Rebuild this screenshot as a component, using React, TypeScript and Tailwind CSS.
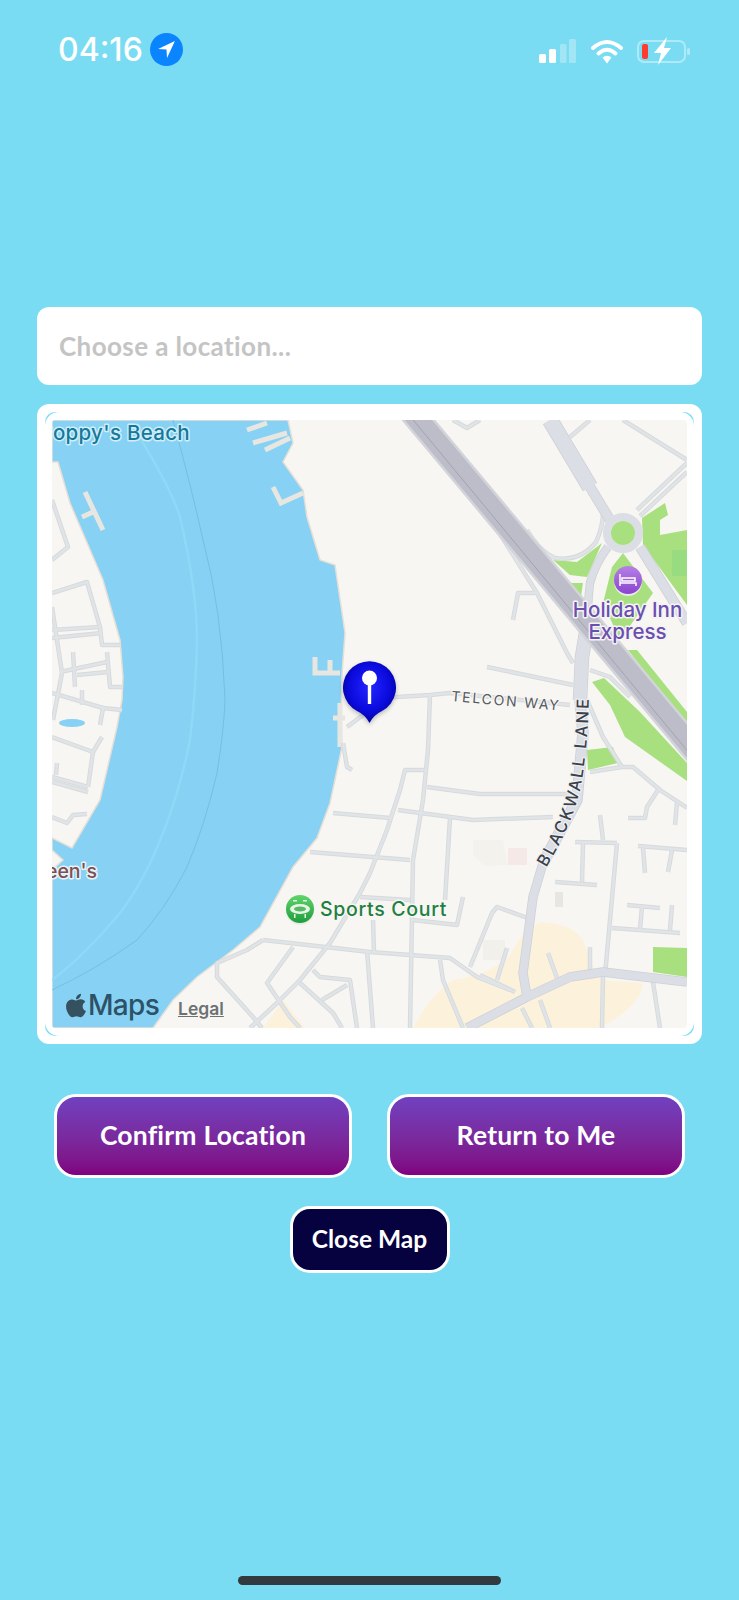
import { FaApple } from 'react-icons/fa'

// map data is in page pixels, see the viewBox on the svg
const LOCAL_ROADS = [
  'M570 437 L590 420',
  'M623 420 L687 460',
  'M453 420 L467 428 L480 420',
  'M527 530 Q540 552 555 558 Q580 562 596 542 Q604 525 603 507',
  'M493 523 L537 593 L567 653 L573 663',
  'M513 620 L518 593 L537 593',
  'M487 667 L573 685',
  'M352 699 L397 697 L430 695 L450 693 L570 705',
  'M430 695 L428 750 L423 800 L413 860 L410 1028',
  'M425 770 L405 770 L400 790 L387 830 L370 873 L360 893 L330 943 L300 980 L277 1003 L250 1028',
  'M427 787 L480 794 L570 794',
  'M398 810 L473 820 L553 817',
  'M450 818 L445 900',
  'M333 813 L390 818',
  'M310 852 L410 860',
  'M360 897 L410 900',
  'M373 920 L374 952',
  'M463 897 L457 925 L413 920',
  'M263 940 L370 952 L450 958 L477 977 L510 990',
  'M263 940 L247 950 L217 963 L217 977 L253 1017 L262 1028',
  'M293 947 L267 983 L290 1017 L300 1028',
  'M313 970 L320 977 L350 980 L357 1028',
  'M300 983 L333 1013 L342 1028',
  'M322 1000 L347 985',
  'M367 950 L373 1028',
  'M440 960 L443 980 L463 1028',
  'M470 967 L492 913 L497 907 L533 920',
  'M507 948 L497 980',
  'M480 975 L515 992',
  'M522 1008 L532 1028',
  'M540 1000 L550 1028',
  'M603 975 L602 1028',
  'M617 843 L605 975',
  'M575 842 L617 843',
  'M583 843 L582 882',
  'M555 882 L597 885',
  'M600 815 L603 840',
  'M612 928 L680 933',
  'M627 905 L660 908',
  'M642 907 L640 929',
  'M672 905 L670 930',
  'M638 846 L687 850',
  'M643 848 L645 873',
  'M672 850 L668 872',
  'M590 947 L590 970',
  'M548 953 L557 978',
  'M653 982 L660 1028',
  'M587 700 L603 737 L622 767',
  'M590 772 L622 767 L633 767 L660 790 L687 808',
  'M658 790 L647 807 L645 818 L628 818',
  'M677 803 L675 825',
  'M590 670 L610 677 L630 697',
  'M637 510 L687 463',
  'M640 516 L687 472',
  // west bank
  'M52 500 L68 547 L52 560',
  'M52 593 L87 582 L100 627 L102 645 L120 645',
  'M52 630 L100 627',
  'M52 638 L102 633',
  'M52 607 L62 673 L53 720',
  'M73 652 L75 687',
  'M107 652 L110 687 L122 687',
  'M60 672 L107 662',
  'M77 675 L108 672',
  'M52 693 L103 708 L100 725',
  'M82 690 L82 705',
  'M103 708 L122 710',
  'M52 737 L93 752 L102 737',
  'M93 752 L88 787',
  'M52 777 L88 787',
  'M52 782 L88 792',
  'M57 763 L56 775',
  'M52 817 L67 823 L73 815 L87 814',
  'M343 743 L347 767 L352 770',
  'M347 727 L363 715',
]

// [path, width]: the lane narrows as it runs south
const MAIN_ROADS: [string, number][] = [
  ['M550 420 L590 487', 15],
  ['M590 487 L610 520', 9],
  ['M640 547 L687 623', 9],
  ['M587 627 Q588 600 590 583 Q596 562 608 547', 7],
  ['M587 627 L582 657 L580 700', 13],
  ['M580 700 L583 733 L577 800 L543 863', 10],
  ['M543 863 L533 897 L523 973 L527 997', 8],
  ['M467 1028 L527 997 L570 977 L603 972 L687 982', 8],
]

const PIERS = [
  'M85 492 L103 530',
  'M82 517 L93 512',
  'M273 487 L281 503 L303 493',
  'M247 430 L267 423',
  'M253 443 L287 433',
  'M265 450 L290 438',
  'M315 657 L315 673 L340 673',
  'M330 660 L330 673',
  'M333 718 L345 718',
  'M340 703 L340 747',
]

const haloStyle = {
  paintOrder: 'stroke',
  strokeLinejoin: 'round',
} as const

const MapLayer = () => (
  <svg
    viewBox="52 420 635 608"
    className="block h-[608px] w-[635px]"
    fontFamily="Inter, 'Liberation Sans', sans-serif"
  >
    <defs>
      <linearGradient id="sportsIcon" x1="0" y1="0" x2="0" y2="1">
        <stop offset="0" stopColor="#5fd66b" />
        <stop offset="1" stopColor="#1f9c3d" />
      </linearGradient>
      <linearGradient id="hotelIcon" x1="0" y1="0" x2="0" y2="1">
        <stop offset="0" stopColor="#b680e6" />
        <stop offset="1" stopColor="#8a45cf" />
      </linearGradient>
      <radialGradient id="pinFill" cx="0.5" cy="0.42" r="0.6">
        <stop offset="0" stopColor="#2424ff" />
        <stop offset="0.6" stopColor="#0c0ce0" />
        <stop offset="1" stopColor="#00009c" />
      </radialGradient>
    </defs>

    <rect x="52" y="420" width="635" height="608" fill="#f8f6f2" />

    {/* river */}
    <path
      d="M52 420 L288 420 L293 443 L283 462 L303 490 L307 517 L320 560 L335 565 L345 633 L342 674 L341 720 L342 747 L330 803 L317 838 L293 867 L260 927 L233 950 L197 977 L173 1000 L153 1028 L52 1028 L52 870 L63 860 L52 850 L52 838 L72 848 L100 800 L117 727 L122 700 L123 677 L120 640 L103 580 L70 503 L58 462 L52 462 Z"
      fill="#86d1f4"
      stroke="#e6dfd6"
      strokeWidth="1.5"
    />
    <path
      d="M137 433 Q172 490 180 517 Q197 590 197 640 Q196 690 190 740 Q180 790 163 833 Q145 880 120 913 Q85 955 52 980"
      fill="none"
      stroke="#90d8f7"
      strokeWidth="2.5"
    />
    <path
      d="M173 420 Q192 490 203 540 Q222 610 225 700 Q224 730 217 773 Q205 825 187 867 Q165 910 137 940 Q95 970 52 990"
      fill="none"
      stroke="#74c0e3"
      strokeWidth="1"
    />
    <ellipse cx="72" cy="723" rx="13" ry="4" fill="#86d1f4" />

    {/* parks and built up areas */}
    <path d="M665 503 L642 518 L643 545 L687 605 L687 550 L687 530 L660 535 L660 520 L668 515 Z" fill="#a8e07f" />
    <rect x="672" y="550" width="15" height="26" fill="#98db80" />
    <path d="M623 553 L653 593 L620 640 L603 603 L612 567 Z" fill="#a8e07f" />
    <path d="M553 560 L577 562 L602 543 L587 577 L570 575 Z" fill="#a8e07f" />
    <path d="M567 583 L583 583 L580 603 Z" fill="#a8e07f" />
    <path d="M592 682 L604 678 L640 712 L687 763 L687 781 L625 737 L610 705 Z" fill="#a8e07f" />
    <path d="M628 650 L637 650 L687 712 L687 725 Z" fill="#a8e07f" />
    <path d="M587 750 L613 747 L618 763 L588 770 Z" fill="#a8e07f" />
    <path d="M653 947 L687 948 L687 977 L653 972 Z" fill="#a8e07f" />
    <path
      d="M413 1028 Q430 995 453 980 Q490 975 510 955 Q525 925 543 922 Q575 925 583 940 Q592 965 600 980 L643 983 Q642 1005 600 1028 Z"
      fill="#fcf2dc"
    />
    <path d="M263 1028 L283 1000 L305 1028 Z" fill="#fcf2dc" />
    <path d="M473 840 L503 840 L505 850 L508 865 L485 866 L473 855 Z" fill="#f4f2ed" />
    <rect x="508" y="848" width="19" height="17" fill="#f4e9e7" />
    <rect x="555" y="892" width="8" height="15" fill="#e8e6e1" />
    <rect x="483" y="940" width="22" height="20" fill="#f1f0ea" />

    {PIERS.map((d) => (
      <path key={d} d={d} fill="none" stroke="#e8e6e0" strokeWidth="5" />
    ))}

    {/* streets, casing first and then the lighter fill */}
    {LOCAL_ROADS.map((d) => (
      <path key={d} d={d} fill="none" stroke="#d6dadd" strokeWidth="4.5" strokeLinejoin="round" />
    ))}
    {LOCAL_ROADS.map((d) => (
      <path key={`${d}-fill`} d={d} fill="none" stroke="#e1e4e7" strokeWidth="2.5" strokeLinejoin="round" />
    ))}
    {MAIN_ROADS.map(([d, w]) => (
      <path key={d} d={d} fill="none" stroke="#cdd0d6" strokeWidth={w + 1.5} strokeLinejoin="round" />
    ))}
    {MAIN_ROADS.map(([d, w]) => (
      <path key={`${d}-fill`} d={d} fill="none" stroke="#dcdee6" strokeWidth={w} strokeLinejoin="round" />
    ))}
    <circle cx="623" cy="533" r="16" fill="none" stroke="#dcdee6" strokeWidth="8" />
    <circle cx="623" cy="533" r="12" fill="#a8e07f" />

    {/* motorway */}
    <path d="M400 398 L705 763" fill="none" stroke="#d3d4da" strokeWidth="26" />
    <path d="M400 398 L705 763" fill="none" stroke="#bcbdc8" strokeWidth="21" />
    <path d="M395 398 L700 766" fill="none" stroke="#a2a3ae" strokeWidth="1" />

    {/* labels */}
    <text
      x="190"
      y="440"
      textAnchor="end"
      fontSize="20.5"
      fontWeight="500"
      letterSpacing="0.3"
      fill="#15799c"
      stroke="#cfeefa"
      strokeWidth="3"
      style={haloStyle}
    >
      Poppy's Beach
    </text>
    <text
      x="97"
      y="878"
      textAnchor="end"
      fontSize="19.5"
      fontWeight="500"
      fill="#7d4f50"
      stroke="#e6f3f8"
      strokeWidth="3"
      style={haloStyle}
    >
      Queen's
    </text>

    <circle cx="300" cy="911" r="14" fill="#e9ebe6" />
    <circle cx="300" cy="909" r="14" fill="url(#sportsIcon)" />
    <ellipse cx="300" cy="909" rx="10" ry="5" fill="#e6f5e4" />
    <ellipse cx="300" cy="909" rx="6" ry="2.5" fill="#58b868" />
    <rect x="293" y="900" width="4" height="1.5" fill="#e6f5e4" />
    <rect x="303" y="900" width="4" height="1.5" fill="#e6f5e4" />
    <rect x="294" y="914" width="1.5" height="4" fill="#e6f5e4" />
    <rect x="304.5" y="914" width="1.5" height="4" fill="#e6f5e4" />
    <text
      x="320"
      y="916"
      fontSize="19.5"
      fontWeight="500"
      letterSpacing="0.7"
      fill="#1f7f43"
      stroke="#f8f6f2"
      strokeWidth="3"
      style={haloStyle}
    >
      Sports Court
    </text>

    <circle cx="628" cy="582" r="14" fill="#e9ebe6" />
    <circle cx="628" cy="580" r="14" fill="url(#hotelIcon)" />
    <path
      d="M620 574 L620 586 M620 583 L636 583 L636 586 M622 581 L622 578 L635 578 L635 581 Z"
      fill="none"
      stroke="#ffffff"
      strokeWidth="1.5"
    />
    <text
      x="627.5"
      y="617"
      textAnchor="middle"
      fontSize="20.5"
      fontWeight="500"
      fill="#6a4fb0"
      stroke="#f5f3f4"
      strokeWidth="3"
      style={haloStyle}
    >
      Holiday Inn
    </text>
    <text
      x="627.5"
      y="639"
      textAnchor="middle"
      fontSize="20.5"
      fontWeight="500"
      fill="#6a4fb0"
      stroke="#f5f3f4"
      strokeWidth="3"
      style={haloStyle}
    >
      Express
    </text>

    <text
      x="451"
      y="701"
      transform="rotate(5 451 701)"
      fontSize="14"
      letterSpacing="1.8"
      fill="#555b63"
      stroke="#f8f6f2"
      strokeWidth="2.5"
      style={haloStyle}
    >
      TELCON WAY
    </text>
    <path id="lanePath" d="M546 868 Q572 825 580 790 Q589 745 589 680" fill="none" />
    <text
      fontSize="16.5"
      letterSpacing="2.2"
      fontWeight="500"
      fill="#3b4148"
      stroke="#eef0f2"
      strokeWidth="2.5"
      style={haloStyle}
    >
      <textPath href="#lanePath">BLACKWALL LANE</textPath>
    </text>

    {/* dropped pin */}
    <g style={{ filter: 'drop-shadow(0 2px 2px rgba(0,0,0,0.25))' }}>
      <path
        d="M369.500 723 Q365.500 715 357 711 A26.500 26.500 0 1 1 382 711 Q373.500 715 369.500 723 Z"
        fill="url(#pinFill)"
      />
    </g>
    <circle cx="369.500" cy="678" r="7.500" fill="#ffffff" />
    <rect x="367.800" y="684" width="3.400" height="20" fill="#ffffff" />
  </svg>
)

const StatusBar = () => (
  <div className="flex h-[100px] items-start justify-between pl-[58px] pr-[48px] pt-[33px]">
    <div className="flex items-center gap-[7px]">
      <span className="font-['Inter',sans-serif] text-[32px] leading-[32px] font-medium text-white">
        04:16
      </span>
      <div className="flex h-[33px] w-[33px] items-center justify-center rounded-full bg-[#0a84ff]">
        <svg viewBox="0 0 20 20" className="h-[21px] w-[21px]">
          <path d="M18 2 L2 9.500 L10 10 L10.500 18 Z" fill="#ffffff" />
        </svg>
      </div>
    </div>
    <div className="flex items-center gap-[15px] pt-[4px]">
      <svg viewBox="0 0 37 24" className="h-[24px] w-[37px]">
        <rect x="0" y="15" width="7" height="9" rx="1.500" fill="#ffffff" />
        <rect x="10" y="10" width="7" height="14" rx="1.500" fill="#ffffff" />
        <rect x="21" y="5" width="6.500" height="19" rx="1.500" fill="#ffffff" fillOpacity="0.3" />
        <rect x="30" y="0" width="7" height="24" rx="1.500" fill="#ffffff" fillOpacity="0.3" />
      </svg>
      <div className="flex items-center gap-[14px]">
        <svg viewBox="0 0 32 25" className="h-[25px] w-[32px]">
          <path d="M2 9 Q16 -3 30 9" fill="none" stroke="#ffffff" strokeWidth="4" strokeLinecap="round" />
          <path d="M7.500 14.500 Q16 7 24.500 14.500" fill="none" stroke="#ffffff" strokeWidth="4" strokeLinecap="round" />
          <path d="M11.500 18.500 L16 24.500 L20.500 18.500 Q16 15 11.500 18.500 Z" fill="#ffffff" />
        </svg>
        <svg viewBox="0 0 54 28" className="h-[28px] w-[54px]">
          <rect x="1" y="4" width="47" height="21" rx="6" fill="none" stroke="#ffffff" strokeOpacity="0.4" strokeWidth="2" />
          <rect x="50" y="11" width="3" height="7" rx="1.500" fill="#ffffff" fillOpacity="0.4" />
          <rect x="5" y="7" width="6" height="15" rx="2" fill="#ff3b30" />
          <path d="M30 0 L17 16 L24 16 L21 28 L34 11 L27 11 Z" fill="#ffffff" />
        </svg>
      </div>
    </div>
  </div>
)

const PurpleButton = ({ label }: { label: string }) => (
  <button className="flex h-[84px] w-[298px] items-center justify-center rounded-[22px] border-[3px] border-white bg-gradient-to-b from-[#7040c0] to-[#800080] text-[26.500px] font-bold tracking-[0.2px] text-white">
    {label}
  </button>
)

export default function App() {
  return (
    <div className="flex h-[1600px] w-[739px] flex-col bg-[#7adcf3] font-['Lato',sans-serif]">
      <StatusBar />

      <div className="mx-[37px] mt-[207px] flex h-[78px] items-center rounded-[12px] bg-white px-[22px] text-[26px] font-bold tracking-[0.4px] text-[#c4c4c4]">
        Choose a location...
      </div>

      <div className="mx-[37px] mt-[19px] rounded-[12px] bg-white p-[8px]">
        <div className="rounded-[10px] bg-[#7adcf3]">
          <div className="rounded-[14px] bg-white px-[7px] py-[8px]">
            <div className="relative h-[608px] w-[635px] overflow-hidden rounded-[4px]">
              <MapLayer />
              <div className="absolute bottom-[6px] left-[13px] flex items-center gap-[1px]">
                <FaApple className="h-[27px] w-[22px] text-[#35505f]" />
                <span className="font-['Inter',sans-serif] text-[28px] leading-[34px] font-medium tracking-[-0.7px] text-[#2d5166]">
                  Maps
                </span>
              </div>
              <span className="absolute bottom-[9px] left-[126px] font-['Inter',sans-serif] text-[17.500px] leading-[20px] font-semibold text-[#6c7272] underline">
                Legal
              </span>
            </div>
          </div>
        </div>
      </div>

      <div className="mt-[50px] flex justify-center gap-[35px]">
        <PurpleButton label="Confirm Location" />
        <PurpleButton label="Return to Me" />
      </div>

      <div className="mt-[28px] flex justify-center">
        <button className="h-[67px] w-[160px] rounded-[20px] border-[3px] border-white bg-[#05023f] text-[24.500px] font-bold text-white">
          Close Map
        </button>
      </div>

      <div className="mx-auto mb-[15px] mt-auto h-[9px] w-[263px] rounded-full bg-[#333a3f]" />
    </div>
  )
}
